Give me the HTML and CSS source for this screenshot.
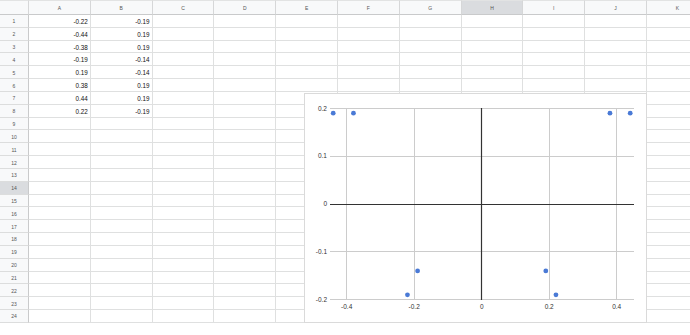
FILE: index.html
```html
<!DOCTYPE html>
<html>

<head>
    <meta charset="UTF-8">
    <title>Sheet</title>
    <link rel="stylesheet" href="styles.css">
</head>

<body>
    <div id="sheet" class="sheet"></div>

    <script type="text/javascript">
        (function (document) {
            const columns = ['A', 'B', 'C', 'D', 'E', 'F', 'G', 'H', 'I', 'J', 'K']
            const values = [
                ['-0.22', '-0.19'],
                ['-0.44', '0.19'],
                ['-0.38', '0.19'],
                ['-0.19', '-0.14'],
                ['0.19', '-0.14'],
                ['0.38', '0.19'],
                ['0.44', '0.19'],
                ['0.22', '-0.19']
            ]
            const sheet = document.getElementById('sheet')

            let html = '<div class="cell head corner"></div>'
            columns.forEach((c) => {
                html += `<div class="cell head${c === 'H' ? ' sel' : ''}">${c}</div>`
            })
            for (let r = 1; r <= 24; r++) {
                html += `<div class="cell rowhead${r === 14 ? ' sel' : ''}">${r}</div>`
                columns.forEach((c, i) => {
                    const row = values[r - 1]
                    const text = row && i < 2 ? row[i] : ''
                    html += `<div class="cell">${text}</div>`
                })
            }
            sheet.innerHTML = html
        })(window.document)
    </script>

    <div class="chart">
        <svg class="plot" width="341" height="228" viewBox="305 94 341 228">
            <!-- grid -->
            <g class="grid">
                <line x1="330" x2="634" y1="108.5" y2="108.5" />
                <line x1="330" x2="634" y1="156.5" y2="156.5" />
                <line x1="330" x2="634" y1="251.5" y2="251.5" />
                <line x1="330" x2="634" y1="299.5" y2="299.5" />
                <line x1="346.5" x2="346.5" y1="108" y2="300" />
                <line x1="414.5" x2="414.5" y1="108" y2="300" />
                <line x1="549.5" x2="549.5" y1="108" y2="300" />
                <line x1="616.5" x2="616.5" y1="108" y2="300" />
            </g>
            <g class="axis">
                <line x1="330" x2="634" y1="204.5" y2="204.5" />
                <line x1="481.5" x2="481.5" y1="108" y2="300" />
            </g>
            <g class="ylabels">
                <text x="327" y="110.6">0.2</text>
                <text x="327" y="158.4">0.1</text>
                <text x="327" y="206.2">0</text>
                <text x="327" y="254">-0.1</text>
                <text x="327" y="301.8">-0.2</text>
            </g>
            <g class="xlabels">
                <text x="346.7" y="308.7">-0.4</text>
                <text x="414.2" y="308.7">-0.2</text>
                <text x="481.7" y="308.7">0</text>
                <text x="549.2" y="308.7">0.2</text>
                <text x="616.7" y="308.7">0.4</text>
            </g>
            <g class="dots">
                <circle cx="407.45" cy="294.8" r="2.4" />
                <circle cx="333.2" cy="113.2" r="2.4" />
                <circle cx="353.45" cy="113.2" r="2.4" />
                <circle cx="417.6" cy="270.9" r="2.4" />
                <circle cx="545.8" cy="270.9" r="2.4" />
                <circle cx="609.95" cy="113.2" r="2.4" />
                <circle cx="630.2" cy="113.2" r="2.4" />
                <circle cx="555.95" cy="294.8" r="2.4" />
            </g>
        </svg>
    </div>
</body>

</html>
```

FILE: styles.css
```css
body {
    margin: 0;
    overflow: hidden;
    background-color: white;
    font-family: "Liberation Sans", Arial, sans-serif;
}

.sheet {
    display: grid;
    grid-template-columns: 29px repeat(11, 61.8px);
    grid-template-rows: 15px repeat(24, 12.83px);
}

.cell {
    box-sizing: border-box;
    display: flex;
    align-items: center;
    justify-content: flex-end;
    padding: 1px 2px 0 0;
    border-right: 1px solid #dfe0e0;
    border-bottom: 1px solid #dfe0e0;
    font-size: 6.3px;
    color: #111;
    white-space: nowrap;
    overflow: hidden;
}

.head {
    justify-content: center;
    padding: 0;
    background-color: #f8f9fa;
    border-top: 1px solid #e2e3e3;
    border-right-color: #d6d7d8;
    border-bottom-color: #c9cacb;
    font-size: 5px;
    color: #555;
}

.rowhead {
    justify-content: center;
    padding: 1px 0 0 0;
    background-color: #f8f9fa;
    border-right-color: #c9cacb;
    border-bottom-color: #dcdddd;
    font-size: 5px;
    color: #555;
}

.sel {
    background-color: #dadcdf;
}

.chart {
    position: absolute;
    left: 304px;
    top: 93px;
    width: 343px;
    height: 230px;
    box-sizing: border-box;
    border: 1px solid #dadada;
    background-color: white;
}

.plot {
    display: block;
}

.grid line {
    stroke: #cccccc;
    stroke-width: 1;
}

.axis line {
    stroke: #333333;
    stroke-width: 1.2;
}

.plot text {
    font-family: "Liberation Sans", Arial, sans-serif;
    font-size: 6.5px;
    fill: #333;
}

.ylabels text {
    text-anchor: end;
}

.xlabels text {
    text-anchor: middle;
}

.dots circle {
    fill: #4a7ad6;
}
```
